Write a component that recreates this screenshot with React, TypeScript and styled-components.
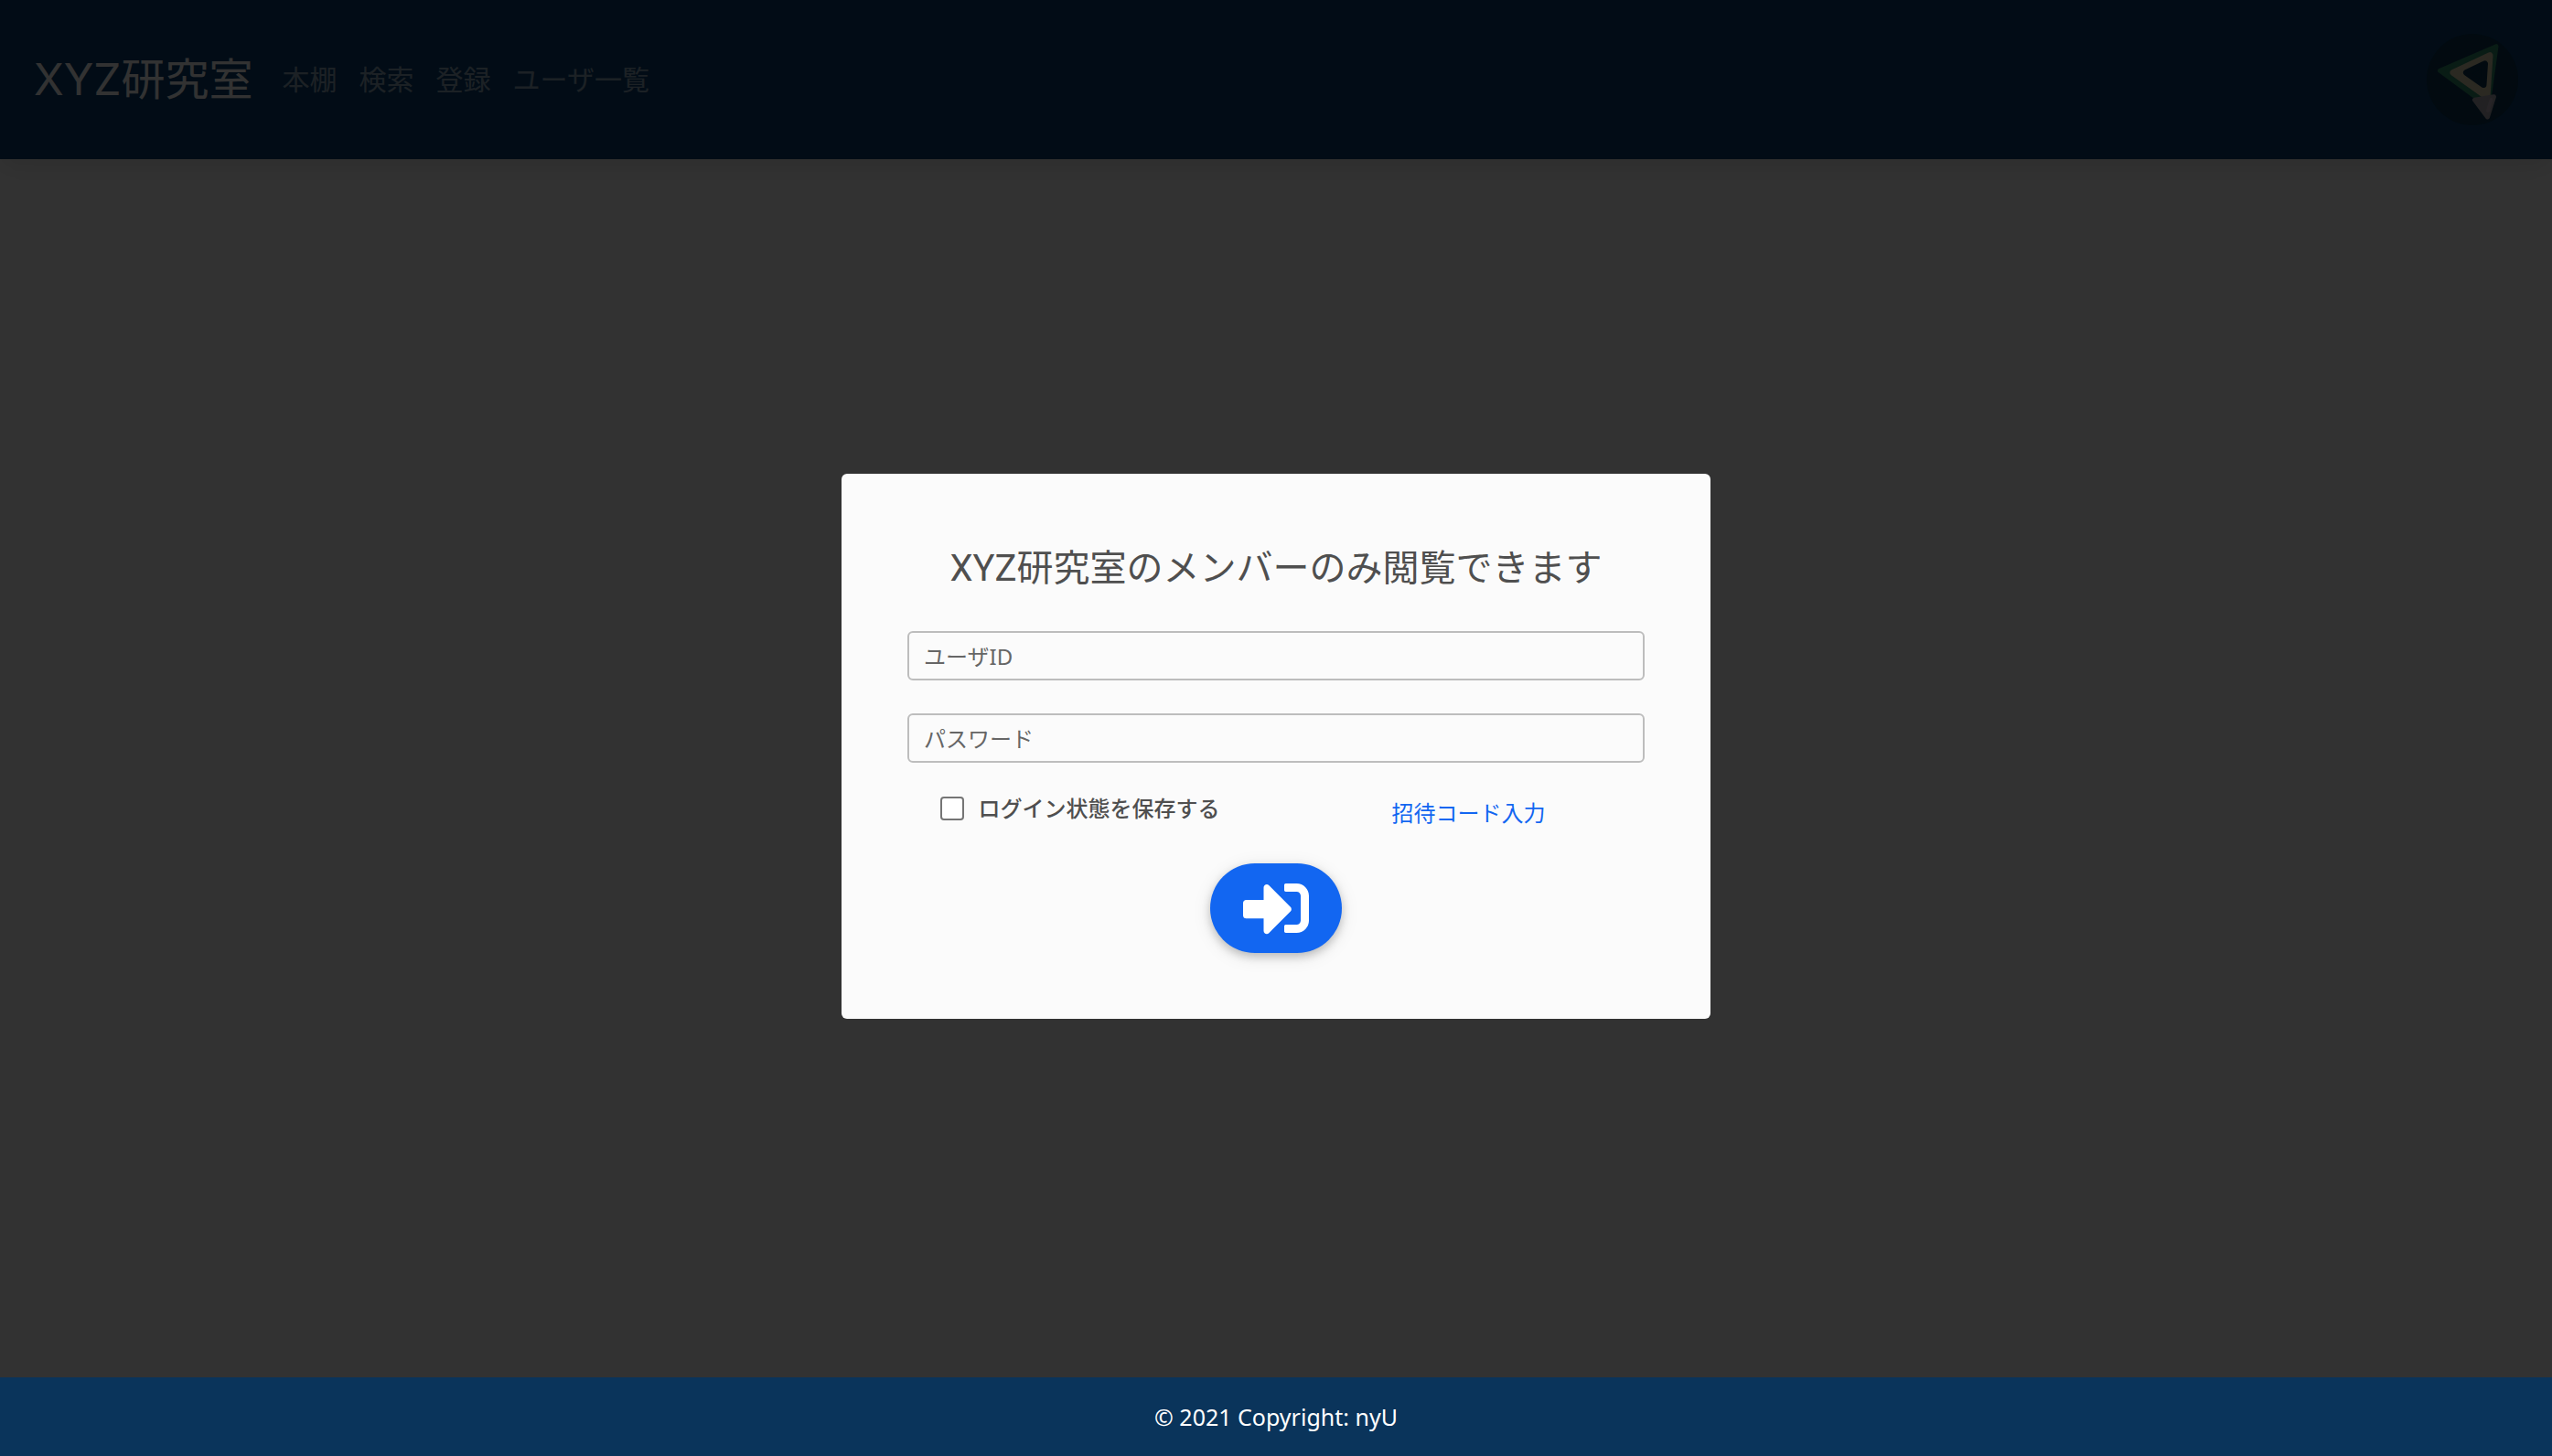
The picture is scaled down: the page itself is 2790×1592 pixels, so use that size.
import React from "react";
import styled, { createGlobalStyle } from "styled-components";
import { FaSignInAlt } from "react-icons/fa";

const GlobalStyle = createGlobalStyle`
  *, *::before, *::after { box-sizing: border-box; }
  body {
    margin: 0;
    background: #fbfbfb;
    color: #4f4f4f;
    font-family: "Noto Sans", "Noto Sans CJK JP", sans-serif;
    font-size: 24px;
    line-height: 38px;
  }
`;

const Page = styled.div`
  min-height: 100vh;
  display: flex;
  flex-direction: column;
`;

const Header = styled.header`
  display: flex;
  align-items: center;
  padding: 37px;
  background: #0a3f6e;
  box-shadow: 0 8px 24px rgba(0, 0, 0, 0.07), 0 14px 44px rgba(0, 0, 0, 0.04);
`;

const Brand = styled.a`
  margin-right: 20px;
  color: #fbfbfb;
  font-family: Inter, "Noto Sans CJK JP", sans-serif;
  font-size: 48px;
  line-height: 72px;
  text-decoration: none;
`;

const Nav = styled.nav`
  display: flex;
  flex: 1;
`;

const NavLink = styled.a`
  padding: 0 12px;
  color: rgba(255, 255, 255, 0.55);
  font-size: 30px;
  line-height: 48px;
  text-decoration: none;
`;

const Avatar = styled.svg`
  display: block;
  width: 100px;
  height: 100px;
  border-radius: 50%;
`;

const Content = styled.main`
  flex: 1;
`;

const Footer = styled.footer`
  position: relative;
  z-index: 2;
  padding: 24px;
  background: #0a345b;
  color: #fff;
  font-size: 25px;
  text-align: center;
`;

const Backdrop = styled.div`
  position: fixed;
  inset: 0;
  z-index: 1;
  display: flex;
  align-items: center;
  justify-content: center;
  padding-top: 40px;
  background: rgba(0, 0, 0, 0.8);
`;

const Dialog = styled.form`
  display: flex;
  flex-direction: column;
  width: 100%;
  max-width: 950px;
  padding: 72px;
  border-radius: 6px;
  background: #fbfbfb;
`;

const Title = styled.h1`
  margin: 0 0 36px;
  font-family: Roboto, "Noto Sans CJK JP", sans-serif;
  font-size: 40px;
  font-weight: 400;
  line-height: 64px;
  text-align: center;
`;

const Field = styled.input`
  width: 100%;
  height: 54px;
  margin-bottom: 36px;
  padding: 0 16px;
  border: 2px solid #bdbdbd;
  border-radius: 6px;
  background: transparent;
  color: #4f4f4f;
  font: inherit;

  &::placeholder {
    color: #666;
    opacity: 1;
  }
`;

const Options = styled.div`
  display: grid;
  grid-template-columns: 1fr 1fr;
  align-items: start;
  justify-items: center;
  margin: 0 -20px 36px -24px;
`;

const Remember = styled.div`
  display: flex;
  align-items: center;
  gap: 16px;
  font-weight: 500;
  line-height: 28px;
`;

const Checkbox = styled.input`
  appearance: none;
  width: 26px;
  height: 26px;
  margin: 0;
  border: 2px solid #757575;
  border-radius: 4px;
  background: #fff;

  &:checked {
    background: #1266f1;
  }
`;

const InviteLink = styled.a`
  color: #1266f1;
  line-height: 38px;
  text-decoration: none;
`;

const Submit = styled.button`
  display: flex;
  align-items: center;
  align-self: center;
  padding: 13px 36px;
  border: 0;
  border-radius: 49px;
  background: #1266f1;
  color: #fff;
  font-size: 72px;
  box-shadow: 0 4px 10px rgba(0, 0, 0, 0.2), 0 4px 20px rgba(0, 0, 0, 0.1);
  cursor: pointer;
`;

const links = ["本棚", "検索", "登録", "ユーザ一覧"];

function UserAvatar() {
  return (
    <Avatar viewBox="0 0 100 100" role="img" aria-label="ユーザ">
      <rect width="100" height="100" fill="#0a3450" />
      <g strokeLinejoin="round">
        <path d="M14.5 40.3 76 13.7 67 79Z" fill="#2f8a6a" stroke="#2f8a6a" strokeWidth="5" />
        <path d="M29 42.3 69 23.7 66 69Z" fill="#d8cca8" stroke="#d8cca8" strokeWidth="7" />
        <path d="M43.5 42.3 63.5 32.8 62 55.5Z" fill="#0a3450" stroke="#0a3450" strokeWidth="7" />
        <path d="M52.5 72.3 73.5 68.8 66.5 91Z" fill="#a8a5b0" stroke="#a8a5b0" strokeWidth="5" />
        <path d="M70.5 72 67 84" fill="none" stroke="#c0b6c0" strokeWidth="4" strokeLinecap="round" />
      </g>
    </Avatar>
  );
}

export default function App() {
  return (
    <Page>
      <GlobalStyle />
      <Header>
        <Brand href="#">XYZ研究室</Brand>
        <Nav>
          {links.map((label) => (
            <NavLink key={label} href="#">
              {label}
            </NavLink>
          ))}
        </Nav>
        <UserAvatar />
      </Header>
      <Content />
      <Backdrop>
        <Dialog onSubmit={(event) => event.preventDefault()}>
          <Title>XYZ研究室のメンバーのみ閲覧できます</Title>
          <Field type="text" placeholder="ユーザID" aria-label="ユーザID" />
          <Field type="password" placeholder="パスワード" aria-label="パスワード" />
          <Options>
            <Remember>
              <Checkbox id="remember" type="checkbox" />
              <label htmlFor="remember">ログイン状態を保存する</label>
            </Remember>
            <InviteLink href="#">招待コード入力</InviteLink>
          </Options>
          <Submit type="submit" aria-label="ログイン">
            <FaSignInAlt />
          </Submit>
        </Dialog>
      </Backdrop>
      <Footer>© 2021 Copyright: nyU</Footer>
    </Page>
  );
}
